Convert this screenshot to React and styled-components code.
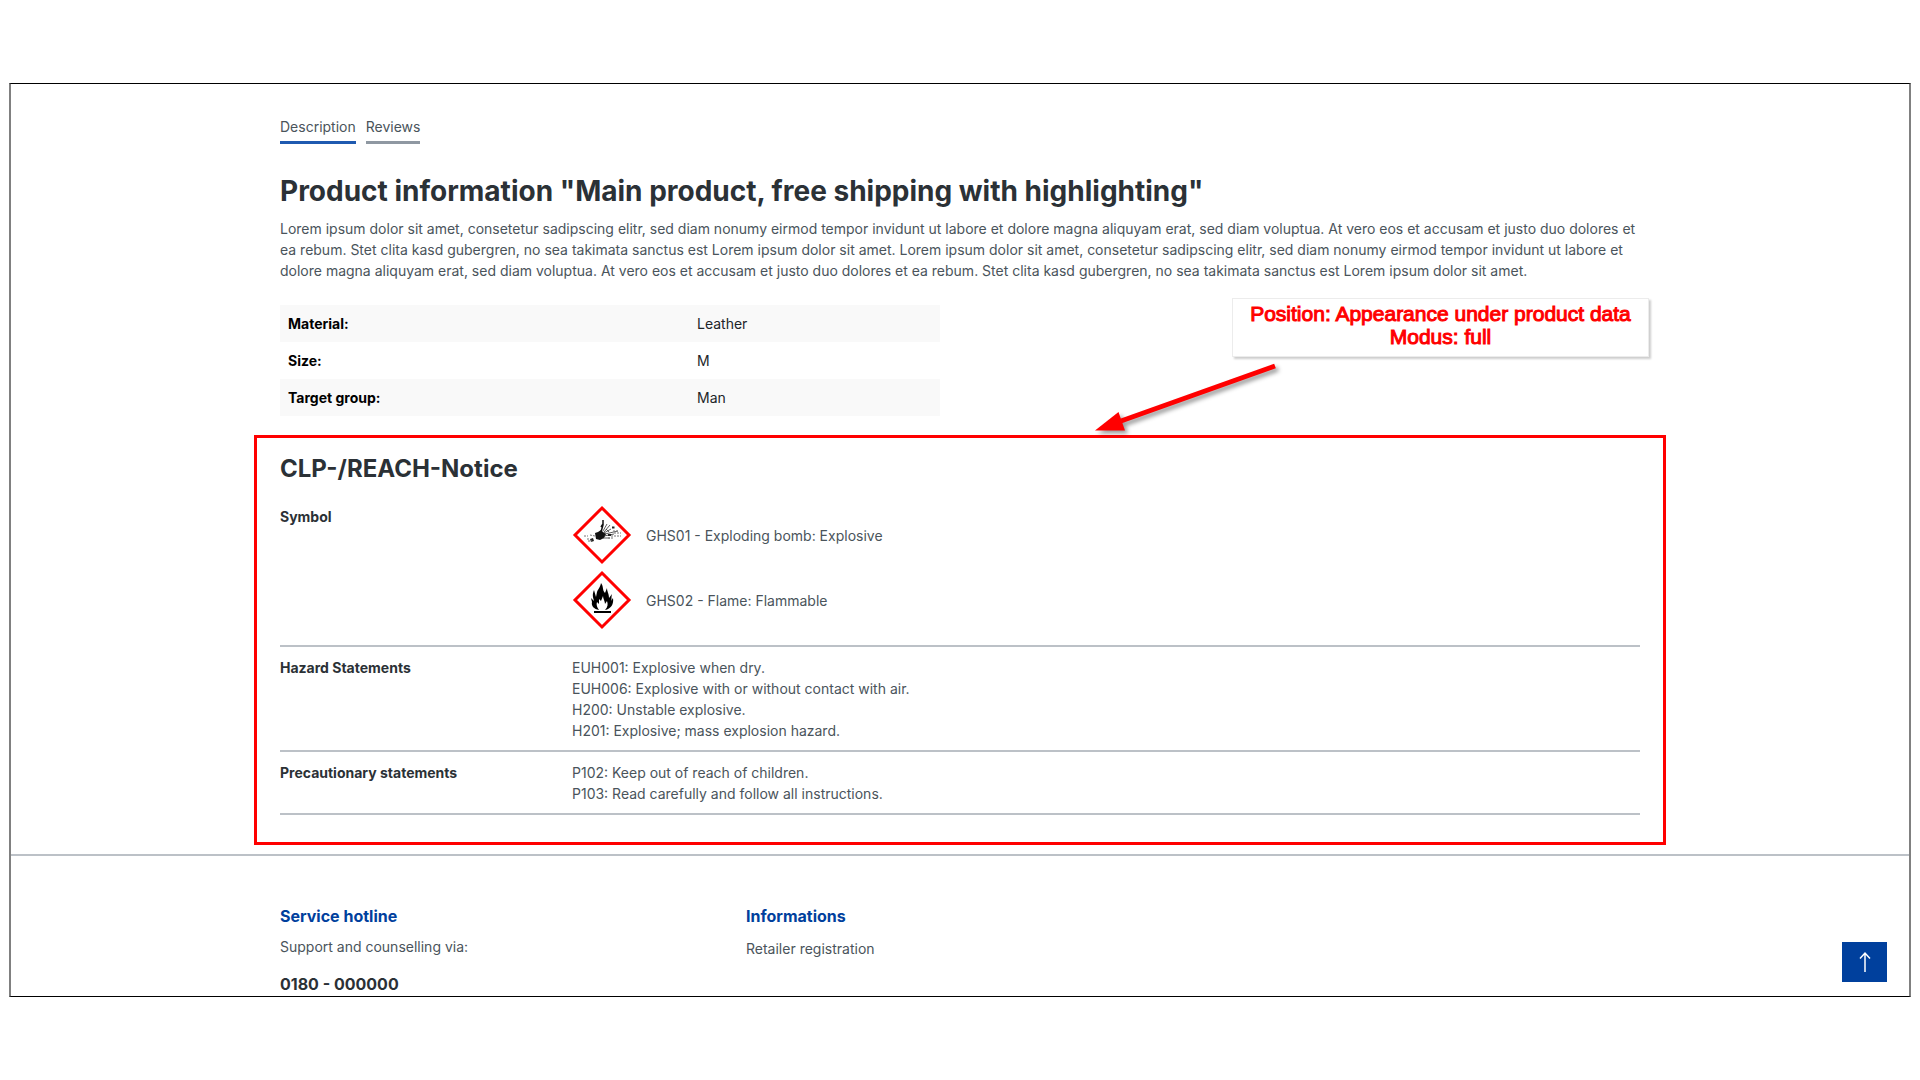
import React from "react";
import styled, { createGlobalStyle } from "styled-components";

const GlobalStyle = createGlobalStyle`
    * {
        box-sizing: border-box;
    }

    body {
        margin: 0;
        background: #fff;
        color: #4a545b;
        font-family: Inter, "Liberation Sans", sans-serif;
        font-size: 14px;
        line-height: 21px;
    }
`;

const Page = styled.div`
    display: flex;
    flex-direction: column;
    justify-content: center;
    min-height: 100vh;
    padding: 0 9px;
`;

const Frame = styled.main`
    position: relative;
    border: solid #000;
    border-width: 1px 2px;
    border-left-color: #808080;
    border-right-color: #808080;
    overflow: hidden;
`;

const Container = styled.div`
    width: 100%;
    max-width: 1412px;
    margin: 0 auto;
`;

const Section = styled.div`
    padding: 0 26px;
`;

const Tabs = styled.nav`
    display: flex;
    gap: 10px;
    padding-top: 32px;
`;

const Tab = styled.a`
    padding-bottom: 4px;
    border-bottom: 3px solid ${({ $active }) => ($active ? "#1f5ab0" : "#8f98a2")};
    color: #4a545b;
    text-decoration: none;
`;

const Title = styled.h1`
    margin: 29px 0 9px;
    color: #2b3136;
    font-size: 28px;
    font-weight: 700;
    line-height: 36px;
`;

const Description = styled.p`
    margin: 0;
`;

const PropertyTable = styled.table`
    width: 660px;
    margin: 24px 0 19px;
    border-collapse: collapse;
    color: #212529;

    tr:nth-child(odd) {
        background: #f9f9f9;
    }

    th,
    td {
        padding: 8px;
        text-align: left;
    }

    th {
        width: 409px;
        color: #000;
        font-weight: 700;
    }
`;

const Notice = styled.section`
    position: relative;
    border: 3px solid #f00;
    padding: 15px 23px 27px;
`;

const NoticeTitle = styled.h2`
    margin: 0 0 11px;
    color: #2b3136;
    font-size: 24px;
    font-weight: 700;
    line-height: 32px;
`;

const NoticeRow = styled.div`
    display: grid;
    grid-template-columns: 292px 1fr;
    padding: 10px 0 9px;
    border-bottom: 2px solid #bcc1c7;
`;

const NoticeLabel = styled.strong`
    color: #2b3136;
    font-weight: 700;
`;

const SymbolItem = styled.div`
    display: flex;
    align-items: center;
    gap: 14px;
    height: 58px;
    margin-bottom: 7px;
`;

const Callout = styled.aside`
    position: absolute;
    top: -140px;
    right: 14px;
    width: 417px;
    height: 59px;
    padding-top: 3px;
    border: 1px solid #ececec;
    background: #fff;
    box-shadow: 2px 2px 2px rgba(0, 0, 0, 0.2);
    color: #f00;
    font-family: "Liberation Sans", Arial, sans-serif;
    font-size: 21px;
    line-height: 23px;
    text-align: center;
    -webkit-text-stroke: 1px #f00;
`;

const Arrow = styled.svg`
    position: absolute;
    top: -78px;
    right: 380px;
    filter: drop-shadow(3px 3px 2px rgba(0, 0, 0, 0.4));
`;

const Footer = styled.footer`
    height: 142px;
    margin-top: 9px;
    border-top: 2px solid #bcc1c7;
    overflow: hidden;
`;

const FooterColumns = styled.div`
    display: grid;
    grid-template-columns: 466px 1fr;
    padding-top: 48px;
`;

const FooterTitle = styled.h3`
    margin: 0 0 8px;
    color: #00409d;
    font-size: 16px;
    font-weight: 700;
    line-height: 24px;
`;

const Hotline = styled.a`
    display: block;
    margin-top: 17px;
    color: #2b3136;
    font-size: 16px;
    font-weight: 700;
    text-decoration: none;
`;

const FooterLink = styled.a`
    display: block;
    padding-top: 2px;
    color: #4a545b;
    text-decoration: none;
`;

const ScrollTop = styled.button`
    position: absolute;
    right: 22px;
    bottom: 14px;
    display: flex;
    align-items: center;
    justify-content: center;
    width: 45px;
    height: 40px;
    padding: 0;
    border: 0;
    background: #00409d;
    color: #fff;
`;

const properties = [
    ["Material:", "Leather"],
    ["Size:", "M"],
    ["Target group:", "Man"],
];

const hazards = [
    "EUH001: Explosive when dry.",
    "EUH006: Explosive with or without contact with air.",
    "H200: Unstable explosive.",
    "H201: Explosive; mass explosion hazard.",
];

const precautions = [
    "P102: Keep out of reach of children.",
    "P103: Read carefully and follow all instructions.",
];

const Pictogram = ({ children }) => (
    <svg width="60" height="60" viewBox="0 0 60 60" aria-hidden="true">
        <path d="M30 3 57 30 30 57 3 30Z" fill="#fff" stroke="#f00" strokeWidth="3" />
        {children}
    </svg>
);

const Bomb = () => (
    <Pictogram>
        <path d="M23 28 26 27 29 25 31 27 34 29 32 33 28 35 24 34Z" fill="#111" />
        <path d="M29 27 31 20 31 15 M31 19 29 22" fill="none" stroke="#111" strokeWidth="1.5" />
        <path
            d="M31 26 35 19 M32 27 38 20 M32 28 39 24 M33 29 46 26 M32 31 42 29 M31 33 38 33 M34 24 37 27"
            fill="none"
            stroke="#333"
            strokeWidth="0.8"
        />
        <path d="M40 21.500h2.500v2h-2.500zM36 29h3v2h-3zM18 34l3-1 1 3-3 1z" fill="#222" />
        <path
            d="M12 31h4M15 34h3M18 30l5 1M16 36h4M41 26h6M39 31h10M42 28h7M36 33h5"
            stroke="#777"
            strokeDasharray="2 1"
        />
    </Pictogram>
);

const Flame = () => (
    <Pictogram>
        <path
            d="M27 40C22 39 19 36 20 32L19 28 22 31C21 27 20 25 22 20L24 27 25 22C26 19 28 18 29 13C32 17 30 20 33 23L35 18C35 22 37 23 37 28L40 24C39 28 40 29 39 31L41 28C42 34 39 39 33 40C36 37 36 34 35 31L33 34C33 31 31 29 31 26L29 31 27 29 27 34 25 32C24 35 25 37 27 40Z"
            fill="#000"
        />
        <path d="M22 42H39" stroke="#000" strokeWidth="2" />
    </Pictogram>
);

export default function App() {
    return (
        <Page>
            <GlobalStyle />
            <Frame>
                <Container>
                    <Section>
                        <Tabs>
                            <Tab href="#description" $active>Description</Tab>
                            <Tab href="#reviews">Reviews</Tab>
                        </Tabs>
                        <Title>Product information "Main product, free shipping with highlighting"</Title>
                        <Description>
                            Lorem ipsum dolor sit amet, consetetur sadipscing elitr, sed diam nonumy eirmod tempor
                            invidunt ut labore et dolore magna aliquyam erat, sed diam voluptua. At vero eos et accusam
                            et justo duo dolores et ea rebum. Stet clita kasd gubergren, no sea takimata sanctus est
                            Lorem ipsum dolor sit amet. Lorem ipsum dolor sit amet, consetetur sadipscing elitr, sed
                            diam nonumy eirmod tempor invidunt ut labore et dolore magna aliquyam erat, sed diam
                            voluptua. At vero eos et accusam et justo duo dolores et ea rebum. Stet clita kasd
                            gubergren, no sea takimata sanctus est Lorem ipsum dolor sit amet.
                        </Description>
                    </Section>
                    <Section>
                        <PropertyTable>
                            <tbody>
                                {properties.map(([label, value]) => (
                                    <tr key={label}>
                                        <th scope="row">{label}</th>
                                        <td>{value}</td>
                                    </tr>
                                ))}
                            </tbody>
                        </PropertyTable>
                    </Section>

                    <Notice>
                        <Callout>
                            Position: Appearance under product data
                            <br />
                            Modus: full
                        </Callout>
                        <Arrow width="190" height="80" viewBox="0 0 190 80" aria-hidden="true">
                            <path d="M182 6 28 61" stroke="#f00" strokeWidth="5" />
                            <path d="M2 70.500 25.500 52 32 70.500Z" fill="#f00" />
                        </Arrow>
                        <NoticeTitle>CLP-/REACH-Notice</NoticeTitle>
                        <NoticeRow>
                            <NoticeLabel>Symbol</NoticeLabel>
                            <div>
                                <SymbolItem><Bomb />GHS01 - Exploding bomb: Explosive</SymbolItem>
                                <SymbolItem><Flame />GHS02 - Flame: Flammable</SymbolItem>
                            </div>
                        </NoticeRow>
                        <NoticeRow>
                            <NoticeLabel>Hazard Statements</NoticeLabel>
                            <div>{hazards.map((text) => <div key={text}>{text}</div>)}</div>
                        </NoticeRow>
                        <NoticeRow>
                            <NoticeLabel>Precautionary statements</NoticeLabel>
                            <div>{precautions.map((text) => <div key={text}>{text}</div>)}</div>
                        </NoticeRow>
                    </Notice>
                </Container>

                <Footer>
                    <Container>
                        <Section>
                            <FooterColumns>
                                <div>
                                    <FooterTitle>Service hotline</FooterTitle>
                                    <div>Support and counselling via:</div>
                                    <Hotline href="tel:0180000000">0180 - 000000</Hotline>
                                </div>
                                <div>
                                    <FooterTitle>Informations</FooterTitle>
                                    <FooterLink href="#retailer">Retailer registration</FooterLink>
                                </div>
                            </FooterColumns>
                        </Section>
                    </Container>
                </Footer>

                <ScrollTop type="button" aria-label="Back to top">
                    <svg width="22" height="22" viewBox="0 0 22 22" fill="none" stroke="#fff" strokeWidth="1.5">
                        <path d="M11 21V2M6 7.500 11 2 16 7.500" />
                    </svg>
                </ScrollTop>
            </Frame>
        </Page>
    );
}
